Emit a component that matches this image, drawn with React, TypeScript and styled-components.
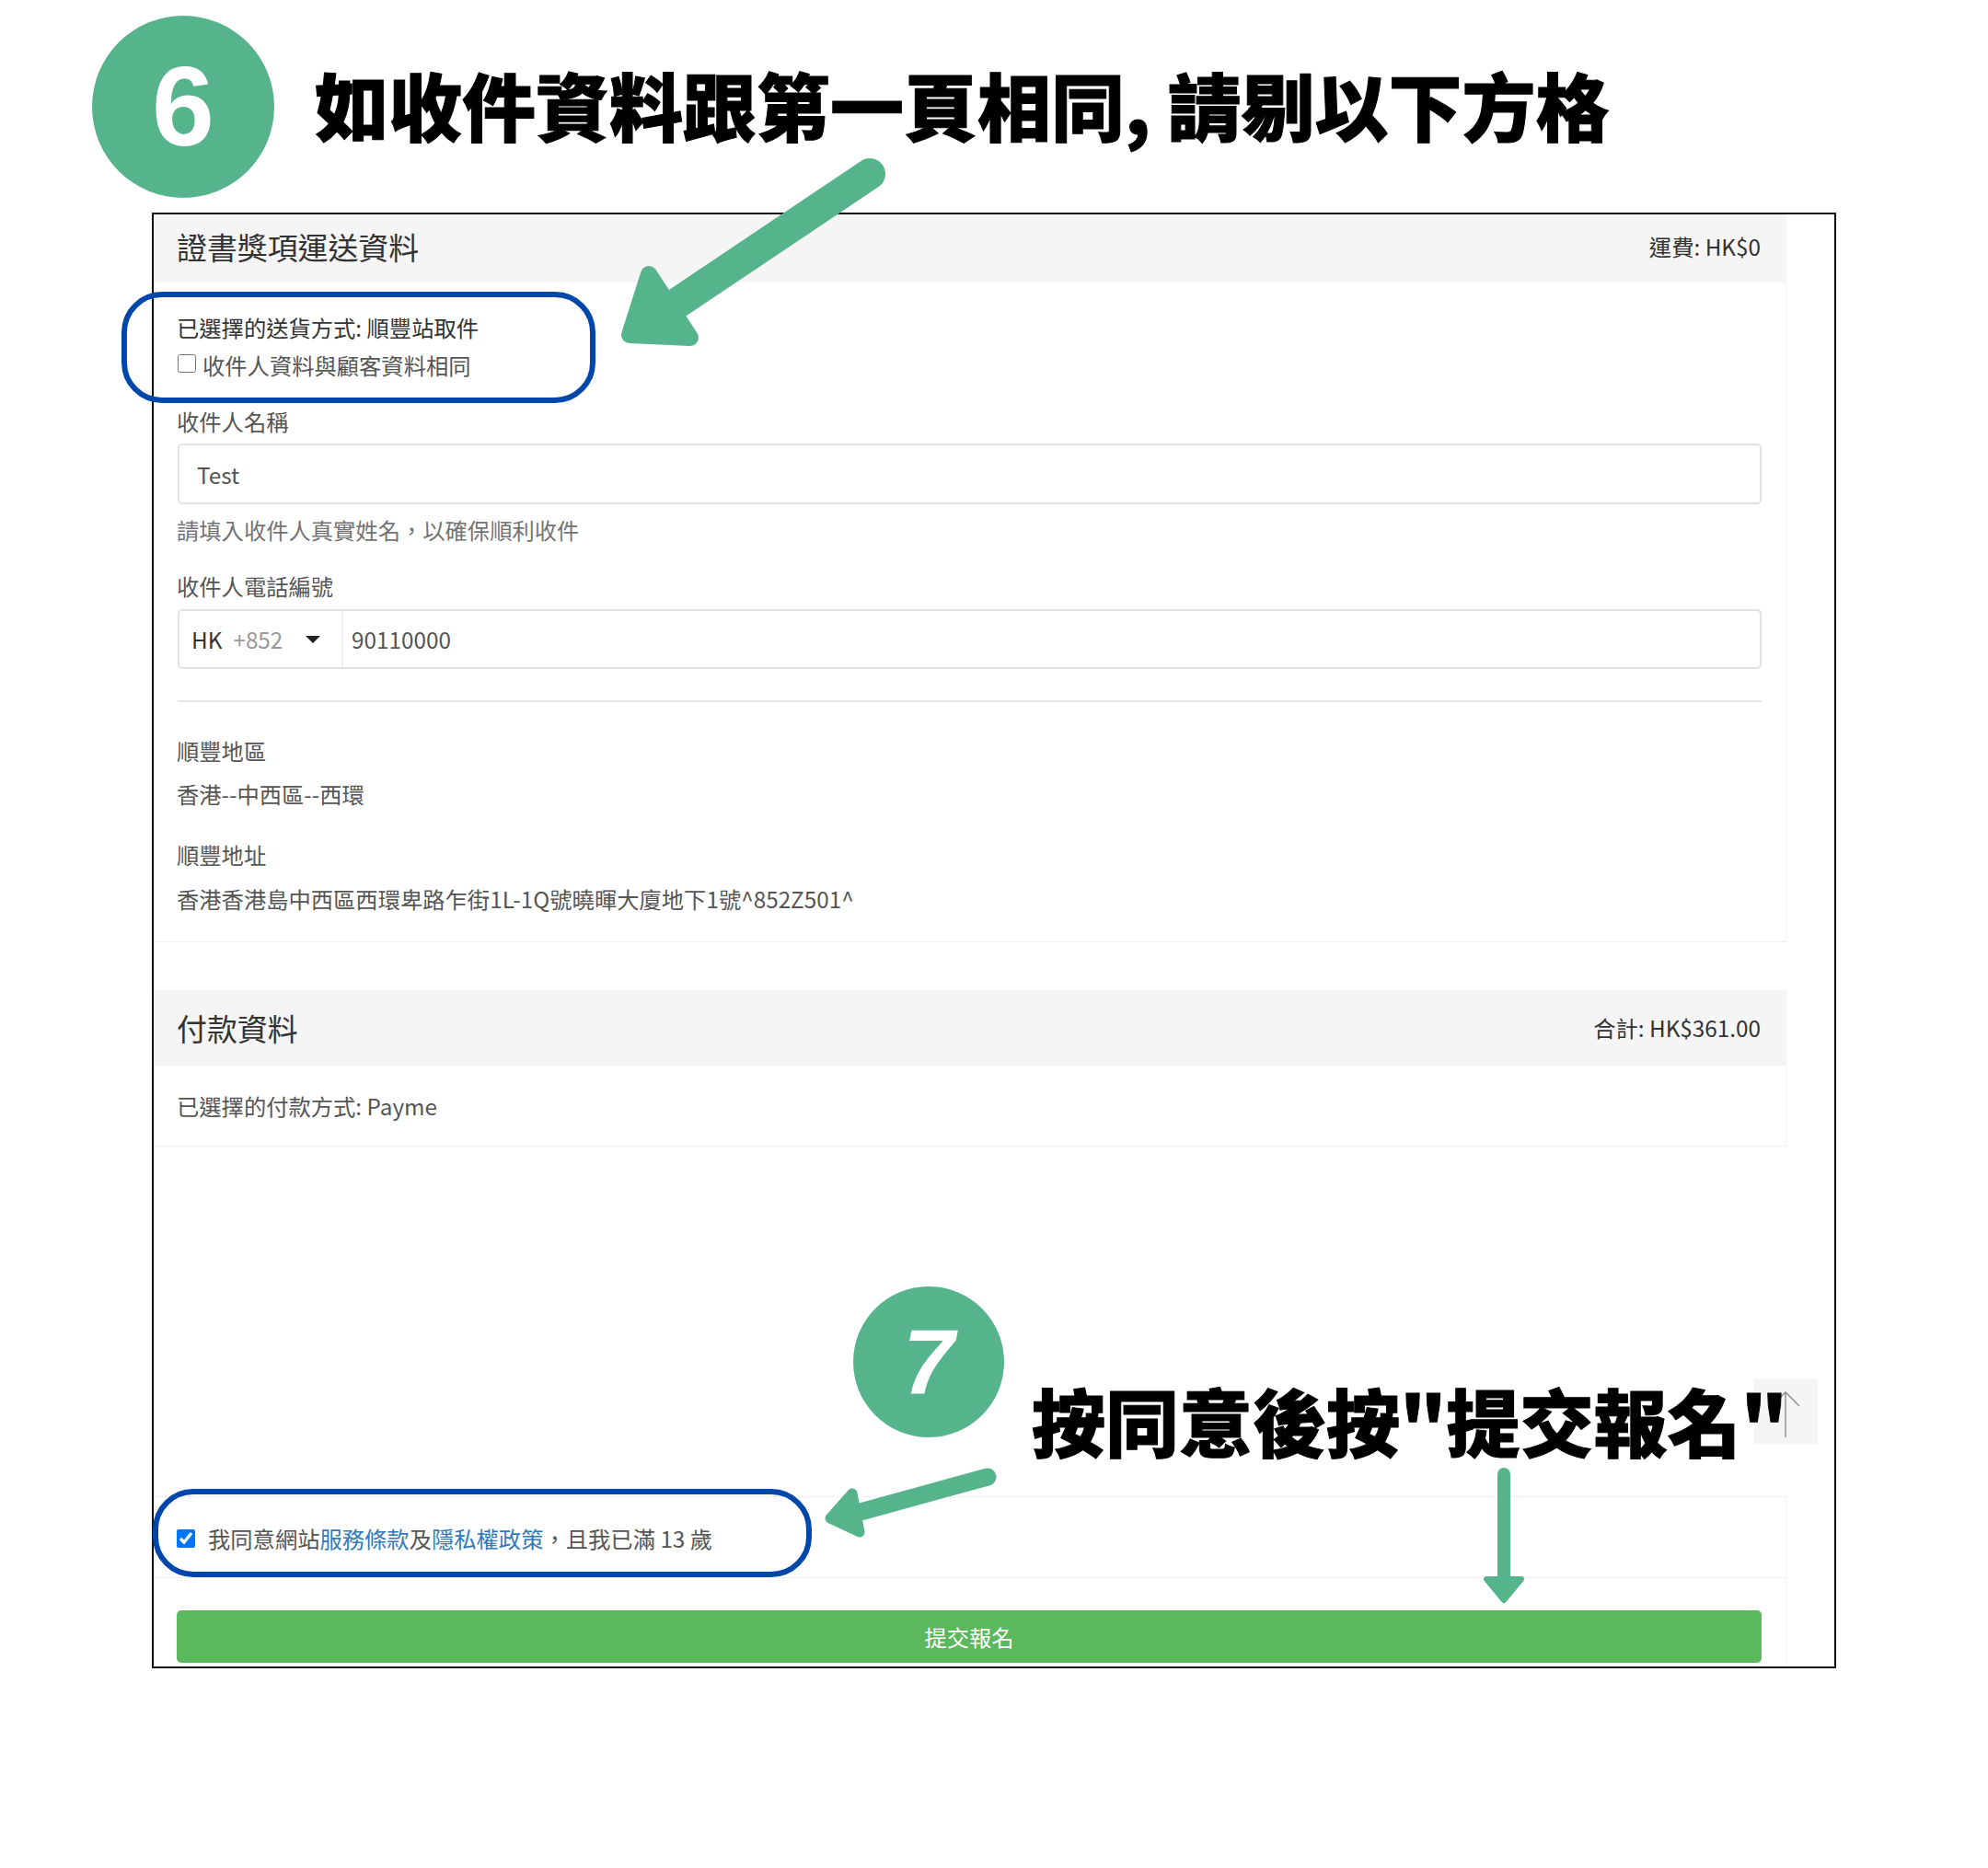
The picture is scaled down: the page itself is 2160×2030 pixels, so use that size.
import React from "react";
import styled, { createGlobalStyle } from "styled-components";

const GREEN = "#56b48c";
const BLUE = "#0047ab";

const GlobalStyle = createGlobalStyle`
  html, body {
    margin: 0;
    padding: 0;
    background: #fff;
  }
  body {
    font-family: "Noto Sans CJK TC", "Noto Sans", sans-serif;
    font-size: 24.3px;
    line-height: 34px;
    color: #555;
  }
  * {
    box-sizing: border-box;
  }
`;

const Page = styled.div`
  position: relative;
  width: 2160px;
  height: 2030px;
  overflow: hidden;
  background: #fff;
`;

const TitleRow = styled.div`
  display: flex;
  align-items: center;
  gap: 44px;
  padding: 17px 0 0 100px;
`;

const StepCircle = styled.div<{ $size: number }>`
  flex: none;
  display: flex;
  align-items: center;
  justify-content: center;
  width: ${(p) => p.$size}px;
  height: ${(p) => p.$size}px;
  border-radius: 50%;
  background: ${GREEN};
  color: #fff;
  font-family: "Liberation Sans", Arial, sans-serif;
  font-weight: 700;
`;

const Six = styled.span`
  font-size: 122px;
  line-height: 1;
`;

const Seven = styled.span`
  font-size: 100px;
  line-height: 1;
  font-style: italic;
`;

const BigText = styled.div`
  font-size: 80px;
  line-height: 100px;
  font-weight: 900;
  color: #000;
  white-space: pre;
  -webkit-text-stroke: 1px #000;
  paint-order: stroke fill;
`;

const TitleText = styled(BigText)`
  margin-top: -8px;
`;

const Frame = styled.div`
  width: 1830px;
  height: 1582px;
  margin: 16px 0 0 165px;
  border: 2px solid #111;
  overflow: hidden;
`;

const Card = styled.section<{ $gap?: number }>`
  width: 1774px;
  margin-top: ${(p) => p.$gap ?? 0}px;
  border-right: 1px solid #f3f3f3;
  border-bottom: 1px solid #f0f0f0;
`;

const CardHead = styled.header<{ $height: number; $lift?: number }>`
  display: flex;
  align-items: center;
  justify-content: space-between;
  height: ${(p) => p.$height}px;
  padding: 0 27px ${(p) => p.$lift ?? 0}px 25px;
  background: #f5f5f5;
  color: #333;
`;

const CardTitle = styled.h3`
  margin: 0;
  font-size: 32.9px;
  line-height: 44px;
  font-weight: 400;
`;

const CardMeta = styled.span`
  font-size: 24.3px;
`;

const CardBody = styled.div<{ $top: number; $bottom: number }>`
  padding: ${(p) => p.$top}px 26px ${(p) => p.$bottom}px 25px;
`;

const Line = styled.div<{ $mt?: number; $dark?: boolean }>`
  margin-top: ${(p) => p.$mt ?? 0}px;
  color: ${(p) => (p.$dark ? "#333" : "#555")};
  white-space: nowrap;
`;

const Hint = styled(Line)`
  color: #737373;
`;

const CheckRow = styled.label<{ $mt?: number; $gap: number }>`
  display: flex;
  align-items: center;
  gap: ${(p) => p.$gap}px;
  margin-top: ${(p) => p.$mt ?? 0}px;
  white-space: nowrap;
`;

const Check = styled.input.attrs({ type: "checkbox" })`
  flex: none;
  width: 20px;
  height: 20px;
  margin: 0;
`;

const OffsetCheck = styled(Check)`
  margin: -5px 0 0 1px;
`;

const TextField = styled.input`
  display: block;
  width: calc(100% - 1px);
  height: 66px;
  margin: 7px 0 0 1px;
  padding: 0 19px;
  border: 2px solid #e2e2e2;
  border-radius: 5px;
  background: #fff;
  color: #555;
  font: inherit;
  outline: none;
`;

const PhoneField = styled.div`
  display: flex;
  align-items: center;
  height: 65px;
  margin: 8px 0 0 1px;
  border: 2px solid #e2e2e2;
  border-radius: 5px;
`;

const Dial = styled.div`
  flex: none;
  display: flex;
  align-items: center;
  width: 178px;
  height: 100%;
  padding-left: 13px;
  border-right: 2px solid #eee;
  color: #333;
`;

const DialCode = styled.span`
  margin-left: 12px;
  color: #999;
`;

const Caret = styled.i`
  width: 0;
  height: 0;
  margin-left: 25px;
  border-left: 8px solid transparent;
  border-right: 8px solid transparent;
  border-top: 8px solid #222;
`;

const PhoneValue = styled.span`
  margin-left: 9px;
  color: #555;
`;

const Rule = styled.hr`
  height: 2px;
  margin: 34px 0 0 1px;
  border: 0;
  background: #e6e6e6;
`;

const Link = styled.a`
  color: #337ab7;
  text-decoration: none;
`;

const AgreeBlock = styled.div`
  height: 88px;
  padding: 28px 25px 0 25px;
  border-bottom: 1px solid #f0f0f0;
`;

const SubmitBlock = styled.div`
  padding: 35px 26px 0 25px;
`;

const SubmitButton = styled.button`
  display: block;
  width: 100%;
  height: 57px;
  border: 0;
  border-radius: 5px;
  background: #5cb85c;
  color: #fff;
  font: inherit;
`;

const OpenCard = styled.section`
  width: 1774px;
  height: 186px;
  margin-top: 380px;
  border-top: 1px solid #f0f0f0;
  border-right: 1px solid #f3f3f3;
`;

/* annotations drawn over the screenshot */
const Overlay = styled.div<{ $x: number; $y: number }>`
  position: absolute;
  left: ${(p) => p.$x}px;
  top: ${(p) => p.$y}px;
`;

const Highlight = styled(Overlay)<{ $w: number; $h: number }>`
  width: ${(p) => p.$w}px;
  height: ${(p) => p.$h}px;
  border: 6px solid ${BLUE};
  border-radius: 44px;
`;

const ArrowSvg = styled.svg`
  display: block;
  overflow: visible;
`;

const ScrollTop = styled(Overlay)`
  display: flex;
  width: 69px;
  height: 70px;
  background: #f5f5f5;
`;

const BigArrow = () => (
  <ArrowSvg width="310" height="220" viewBox="660 165 310 220">
    <path d="M945 189L735 330" stroke={GREEN} strokeWidth="34" strokeLinecap="round" />
    <path
      d="M705 298L750 367L684 364Z"
      fill={GREEN}
      stroke={GREEN}
      strokeWidth="18"
      strokeLinejoin="round"
    />
  </ArrowSvg>
);

const SideArrow = () => (
  <ArrowSvg width="200" height="80" viewBox="890 1594 200 80">
    <path d="M1073 1605L935 1643" stroke={GREEN} strokeWidth="19" strokeLinecap="round" />
    <path
      d="M926 1623L902 1650L934 1665Z"
      fill={GREEN}
      stroke={GREEN}
      strokeWidth="11"
      strokeLinejoin="round"
    />
  </ArrowSvg>
);

const DownArrow = () => (
  <ArrowSvg width="44" height="150" viewBox="1612 1594 44 150">
    <path d="M1634 1602V1716" stroke={GREEN} strokeWidth="14" strokeLinecap="round" />
    <path
      d="M1615 1716H1653L1634 1739Z"
      fill={GREEN}
      stroke={GREEN}
      strokeWidth="6"
      strokeLinejoin="round"
    />
  </ArrowSvg>
);

const UpArrow = () => (
  <ArrowSvg width="69" height="70" viewBox="0 0 69 70">
    <path d="M19 29L34 14L49 29M34 14V63" fill="none" stroke="#999" strokeWidth="1.6" />
  </ArrowSvg>
);

export default function App() {
  return (
    <Page>
      <GlobalStyle />
      <TitleRow>
        <StepCircle $size={198}>
          <Six>6</Six>
        </StepCircle>
        <TitleText>如收件資料跟第一頁相同, 請剔以下方格</TitleText>
      </TitleRow>

      <Frame>
        <Card>
          <CardHead $height={74} $lift={4}>
            <CardTitle>證書獎項運送資料</CardTitle>
            <CardMeta>運費: HK$0</CardMeta>
          </CardHead>
          <CardBody $top={32} $bottom={29}>
            <Line $dark>已選擇的送貨方式: 順豐站取件</Line>
            <CheckRow $mt={7} $gap={7}>
              <OffsetCheck />
              收件人資料與顧客資料相同
            </CheckRow>
            <Line $mt={27}>收件人名稱</Line>
            <TextField defaultValue="Test" />
            <Hint $mt={11}>請填入收件人真實姓名，以確保順利收件</Hint>
            <Line $mt={27}>收件人電話編號</Line>
            <PhoneField>
              <Dial>
                HK<DialCode>+852</DialCode>
                <Caret />
              </Dial>
              <PhoneValue>90110000</PhoneValue>
            </PhoneField>
            <Rule />
            <Line $mt={36}>順豐地區</Line>
            <Line $mt={13}>香港--中西區--西環</Line>
            <Line $mt={32}>順豐地址</Line>
            <Line $mt={14}>香港香港島中西區西環卑路乍街1L-1Q號曉暉大廈地下1號^852Z501^</Line>
          </CardBody>
        </Card>

        <Card $gap={52}>
          <CardHead $height={82}>
            <CardTitle>付款資料</CardTitle>
            <CardMeta>合計: HK$361.00</CardMeta>
          </CardHead>
          <CardBody $top={27} $bottom={26}>
            <Line>已選擇的付款方式: Payme</Line>
          </CardBody>
        </Card>

        <OpenCard>
          <AgreeBlock>
            <CheckRow $gap={14}>
              <Check defaultChecked />
              <span>
                我同意網站<Link href="#">服務條款</Link>及<Link href="#">隱私權政策</Link>，且我已滿 13 歲
              </span>
            </CheckRow>
          </AgreeBlock>
          <SubmitBlock>
            <SubmitButton type="button">提交報名</SubmitButton>
          </SubmitBlock>
        </OpenCard>
      </Frame>

      <Highlight $x={132} $y={317} $w={515} $h={121} />
      <Highlight $x={166} $y={1618} $w={716} $h={96} />

      <Overlay $x={660} $y={165}>
        <BigArrow />
      </Overlay>

      <ScrollTop $x={1906} $y={1499}>
        <UpArrow />
      </ScrollTop>

      <Overlay $x={927} $y={1398}>
        <StepCircle $size={164}>
          <Seven>7</Seven>
        </StepCircle>
      </Overlay>
      <Overlay $x={1121} $y={1492}>
        <BigText>按同意後按"提交報名"</BigText>
      </Overlay>
      <Overlay $x={890} $y={1594}>
        <SideArrow />
      </Overlay>
      <Overlay $x={1612} $y={1594}>
        <DownArrow />
      </Overlay>
    </Page>
  );
}
